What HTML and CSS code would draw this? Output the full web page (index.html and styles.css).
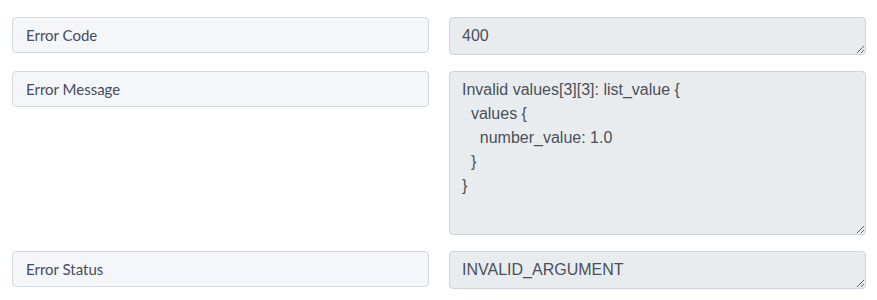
FILE: index.html
```html
<!DOCTYPE html>
<html lang="en">
<head>
    <meta charset="UTF-8" />
    <meta name="viewport" content="width=device-width, initial-scale=1.0" />
    <title>Error Details</title>
    <link rel="stylesheet" href="styles.css">
</head>
<body>
<main class="error-form">
    <div class="field-row">
        <div class="field-label">Error Code</div>
        <textarea class="field-value" rows="1" readonly>400</textarea>
    </div>
    <div class="field-row">
        <div class="field-label">Error Message</div>
        <textarea class="field-value tall" readonly>Invalid values[3][3]: list_value {
  values {
    number_value: 1.0
  }
}</textarea>
    </div>
    <div class="field-row">
        <div class="field-label">Error Status</div>
        <textarea class="field-value" rows="1" readonly>INVALID_ARGUMENT</textarea>
    </div>
</main>
</body>
</html>
```

FILE: styles.css
```css
* {
    box-sizing: border-box;
}
body {
    margin: 0;
    padding: 17px 11px 0 12px;
    background-color: #ffffff;
}
.error-form {
    display: flex;
    flex-direction: column;
    gap: 16px;
}
.field-row {
    display: grid;
    grid-template-columns: 1fr 1fr;
    gap: 20px;
    align-items: start;
}
.field-label {
    height: 36px;
    padding: 0 13px;
    display: flex;
    align-items: center;
    background-color: #f4f6f9;
    border: 1px solid #d3d7de;
    border-radius: 4px;
    font-family: Lato, "Open Sans", sans-serif;
    font-size: 15px;
    color: #464c5a;
}
.field-value {
    display: block;
    width: 100%;
    height: 38px;
    margin: 0;
    padding: 6px 12px;
    background-color: #e9ecef;
    border: 1px solid #ced4da;
    border-radius: 4px;
    font-family: "Liberation Sans", Arial, sans-serif;
    font-size: 16px;
    line-height: 24px;
    color: #495057;
    resize: vertical;
    overflow: hidden;
}
.field-value.tall {
    height: 164px;
}
.field-value:focus {
    outline: none;
}
```
